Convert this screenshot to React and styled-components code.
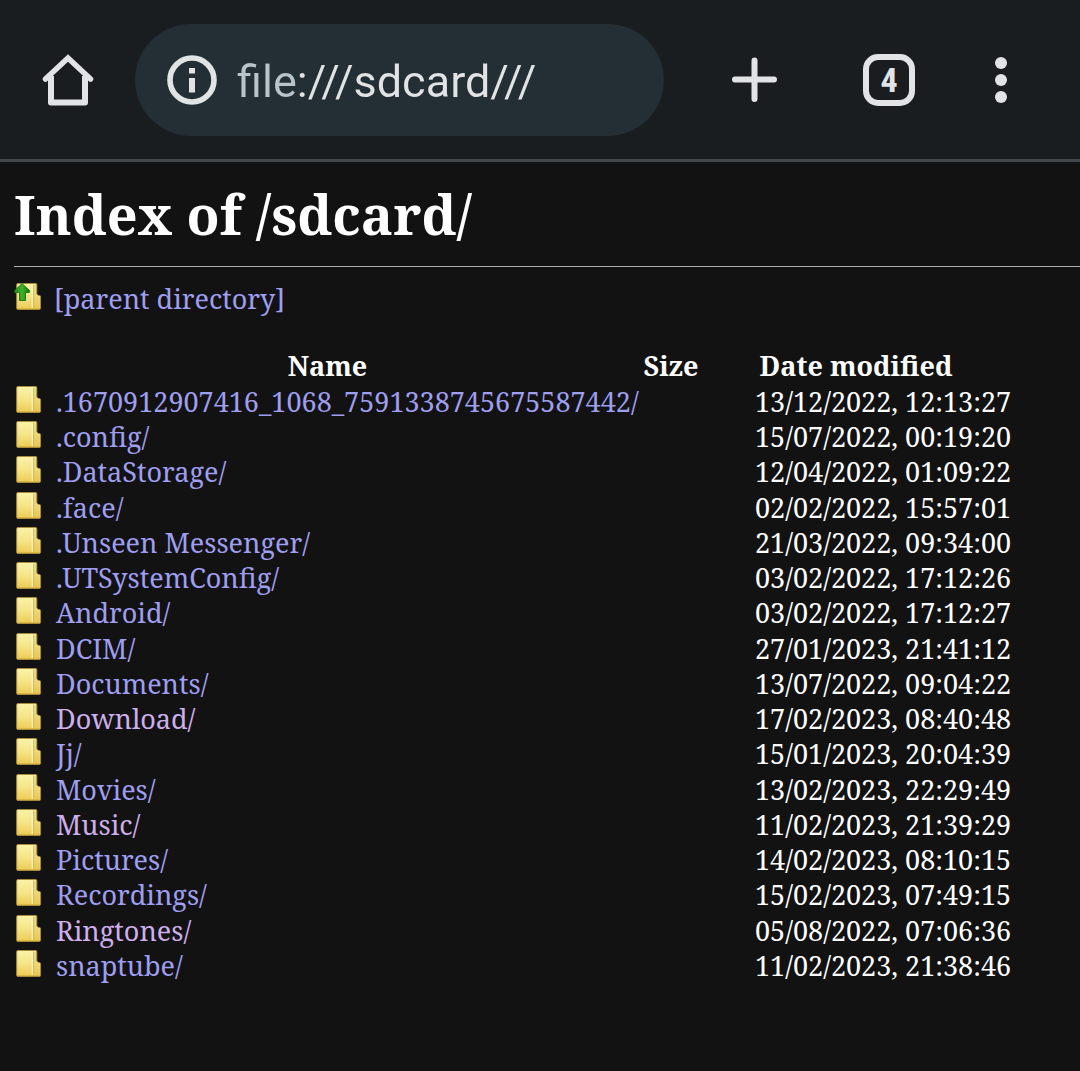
import React from "react";
import styled, { createGlobalStyle } from "styled-components";

const serif = '"Noto Serif", "Droid Serif", "Liberation Serif", serif';

const GlobalStyle = createGlobalStyle`
  * { box-sizing: border-box; }
  html { background: #121212; }
  body { margin: 0; color: #fff; font-family: ${serif}; font-size: 27px; line-height: 35px; }
`;

const Toolbar = styled.header`
  display: flex;
  align-items: center;
  padding: 24px 35px 23px 0;
  background: #1a1d1f;
  border-bottom: 3px solid #43474a;
`;

const ToolButton = styled.button`
  display: flex;
  align-items: center;
  justify-content: center;
  flex: none;
  width: ${(p) => p.$width}px;
  height: 112px;
  padding: 0;
  border: 0;
  background: none;
  color: #e1e3e5;
`;

const AddressBar = styled.div`
  display: flex;
  align-items: center;
  gap: 20px;
  flex: 1;
  min-width: 0;
  height: 112px;
  margin-right: 23px;
  padding: 0 32px;
  border-radius: 56px;
  background: #232f34;
  color: #e1e3e5;
`;

const InfoButton = styled.button`
  display: flex;
  flex: none;
  padding: 0;
  border: 0;
  background: none;
  color: inherit;
`;

const UrlInput = styled.input`
  flex: 1;
  min-width: 0;
  height: 64px;
  padding: 3px 0 0;
  border: 0;
  outline: 0;
  background: linear-gradient(to right, #b9c3ca 60px, #e1e3e5 60px);
  background-clip: text;
  -webkit-background-clip: text;
  color: transparent;
  font-family: Roboto, sans-serif;
  font-size: 45px;
`;

const TabCount = styled.span`
  display: flex;
  align-items: center;
  justify-content: center;
  width: 52px;
  height: 52px;
  border: 6px solid currentColor;
  border-radius: 15px;
  font: bold 34px/40px "Roboto Condensed", "Liberation Sans Narrow", Roboto, sans-serif;
`;

const Page = styled.main`
  padding: 16px 0 0 14px;
`;

const Title = styled.h1`
  margin: 0;
  padding-bottom: 15px;
  border-bottom: 1px solid #aeacae;
  font-size: 54px;
  line-height: 73px;
`;

const ParentRow = styled.div`
  margin: 14px 0 32px;
`;

const EntryLink = styled.a`
  display: flex;
  width: max-content;
  gap: ${(p) => (p.$up ? 12 : 14)}px;
  color: ${(p) => (p.$visited ? "#ceaeec" : "#9f9ef0")};
  text-decoration: none;

  svg { margin-top: 2px; }
`;

const Listing = styled.table`
  border-collapse: collapse;

  tbody tr:nth-child(4n + 3) td { height: 36px; }
`;

const Heading = styled.th`
  min-width: ${(p) => p.$width}px;
  padding: 0 0 1px;
`;

const Cell = styled.td`
  height: 35px;
  padding: 0 0 0 ${(p) => (p.$detail ? 54 : 0)}px;
  vertical-align: top;
  white-space: nowrap;
`;

function HomeIcon() {
  return (
    <svg width="56" height="56" viewBox="0 0 56 56" fill="none" stroke="currentColor" strokeWidth="6" strokeLinejoin="round">
      <path d="M5.500 27 28 6 50.500 27" strokeWidth="5.5" strokeLinejoin="miter" strokeLinecap="round" />
      <path d="M11 24V50.5H45V24" />
    </svg>
  );
}

function InfoIcon() {
  return (
    <svg width="50" height="50" viewBox="0 0 50 50" fill="currentColor">
      <circle cx="25" cy="25" r="22" fill="none" stroke="currentColor" strokeWidth="5.6" />
      <path d="M22 13h6v5.500h-6zM22 23h6v14.500h-6z" />
    </svg>
  );
}

function PlusIcon() {
  return (
    <svg width="46" height="46" viewBox="0 0 46 46" stroke="currentColor" strokeWidth="6" strokeLinecap="round">
      <path d="M23.500 3.500V42M4 22.500H43" />
    </svg>
  );
}

function MenuIcon() {
  return (
    <svg width="12" height="46" viewBox="0 0 12 46" fill="currentColor">
      <circle cx="6" cy="6" r="6" />
      <circle cx="6" cy="23" r="6" />
      <circle cx="6" cy="40" r="6" />
    </svg>
  );
}

function FolderGradients() {
  return (
    <svg width="0" height="0" style={{ display: "block" }} aria-hidden="true">
      <defs>
        <linearGradient id="front" x1="0" y1="0" x2="0" y2="1">
          <stop offset="0" stopColor="#fbf3a8" />
          <stop offset="0.5" stopColor="#f6e488" />
          <stop offset="1" stopColor="#ebcb52" />
        </linearGradient>
        <linearGradient id="arrow" x1="0" y1="0" x2="1" y2="0">
          <stop offset="0" stopColor="#249016" />
          <stop offset="0.5" stopColor="#3fb028" />
          <stop offset="1" stopColor="#14780c" />
        </linearGradient>
      </defs>
    </svg>
  );
}

function FolderIcon({ up }) {
  return (
    <svg width="28" height="28" viewBox="0 0 28 28" fill="none" aria-hidden="true">
      <path d="M4 .500H21.500Q22.800 .500 22.800 1.800V11L24.200 12.500H25.200Q26.500 12.500 26.500 13.800V25.200Q26.500 26.500 25.200 26.500H4Q2.700 26.500 2.700 25.200V1.800Q2.700 .500 4 .500Z" fill="url(#front)" stroke="#a88c3c" strokeWidth="1" />
      <path d="M20 1.500H22V12L24 14H25.500V25.500H20Z" fill="#e6c453" opacity="0.450" />
      <path d="M18.300 1.500V25.500" stroke="#fffbe0" strokeWidth="1.300" opacity="0.700" />
      <path d="M19.600 1.500V25.500" stroke="#cdae4c" strokeWidth="1" opacity="0.800" />
      <path d="M3.800 25.500H25.500" stroke="#dcb845" strokeWidth="1" />
      {up && <path d="M8 .500 15.500 7.500V9.500H11.500V17.500H5.500V9.500H.800V7.500Z" fill="url(#arrow)" stroke="#1f7d14" strokeWidth="1" strokeLinejoin="round" />}
    </svg>
  );
}

const entries = [
  [".1670912907416_1068_7591338745675587442/", "13/12/2022, 12:13:27"],
  [".config/", "15/07/2022, 00:19:20"],
  [".DataStorage/", "12/04/2022, 01:09:22"],
  [".face/", "02/02/2022, 15:57:01"],
  [".Unseen Messenger/", "21/03/2022, 09:34:00"],
  [".UTSystemConfig/", "03/02/2022, 17:12:26"],
  ["Android/", "03/02/2022, 17:12:27"],
  ["DCIM/", "27/01/2023, 21:41:12"],
  ["Documents/", "13/07/2022, 09:04:22"],
  ["Download/", "17/02/2023, 08:40:48", true],
  ["Jj/", "15/01/2023, 20:04:39"],
  ["Movies/", "13/02/2023, 22:29:49"],
  ["Music/", "11/02/2023, 21:39:29", true],
  ["Pictures/", "14/02/2023, 08:10:15"],
  ["Recordings/", "15/02/2023, 07:49:15"],
  ["Ringtones/", "05/08/2022, 07:06:36", true],
  ["snaptube/", "11/02/2023, 21:38:46"],
];

export default function App() {
  return (
    <>
      <GlobalStyle />
      <FolderGradients />
      <Toolbar>
        <ToolButton $width={135} aria-label="Home"><HomeIcon /></ToolButton>
        <AddressBar>
          <InfoButton aria-label="Page information"><InfoIcon /></InfoButton>
          <UrlInput aria-label="Address" defaultValue="file:///sdcard///" spellCheck={false} />
        </AddressBar>
        <ToolButton $width={134} aria-label="New tab"><PlusIcon /></ToolButton>
        <ToolButton $width={136} aria-label="Open tabs"><TabCount>4</TabCount></ToolButton>
        <ToolButton $width={88} aria-label="More options"><MenuIcon /></ToolButton>
      </Toolbar>
      <Page>
        <Title>Index of /sdcard/</Title>
        <ParentRow>
          <EntryLink $up href="#parent"><FolderIcon up />[parent directory]</EntryLink>
        </ParentRow>
        <Listing>
          <thead>
            <tr>
              <Heading $width={627}>Name</Heading>
              <Heading $width={60}>Size</Heading>
              <Heading $width={310}>Date modified</Heading>
            </tr>
          </thead>
          <tbody>
            {entries.map(([name, date, visited]) => (
              <tr key={name}>
                <Cell><EntryLink $visited={visited} href={"#" + name}><FolderIcon />{name}</EntryLink></Cell>
                <Cell $detail />
                <Cell $detail>{date}</Cell>
              </tr>
            ))}
          </tbody>
        </Listing>
      </Page>
    </>
  );
}
